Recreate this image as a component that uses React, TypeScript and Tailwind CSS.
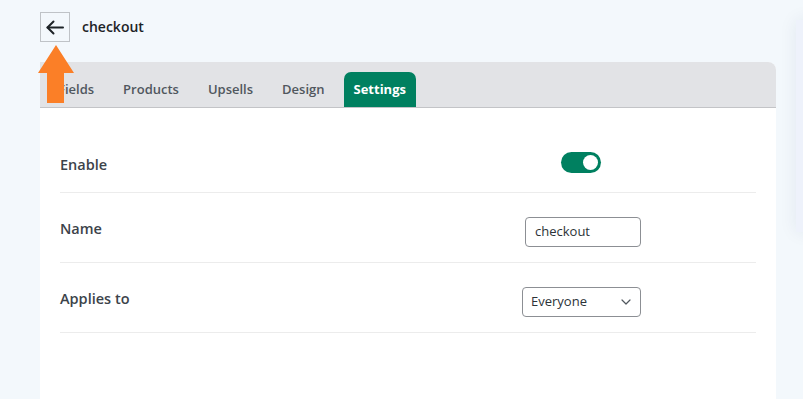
import { ChevronDown } from "lucide-react"

const tabs = ["Fields", "Products", "Upsells", "Design", "Settings"]

function Toggle() {
  return (
    <div className="flex h-[21px] w-[40px] items-center justify-end rounded-full bg-[#008060] px-[3px]">
      <div className="h-[15px] w-[15px] rounded-full bg-white" />
    </div>
  )
}

export default function App() {
  return (
    <div
      className="relative h-[399px] w-[803px] overflow-hidden bg-[#f3f8fc] pl-[40px] pt-[12px] text-[#3c434a]"
      style={{ fontFamily: '"Open Sans", "Noto Sans", sans-serif' }}
    >
      {/* panel peeking in from the right */}
      <div className="absolute left-[796px] top-[20px] h-[212px] w-[40px] bg-[#eef2fb] shadow-[0_0_18px_rgba(30,50,90,0.08)]" />

      <div className="flex h-[30px] items-center gap-[12px]">
        <button className="flex h-[30px] w-[30px] items-center justify-center border border-[#bfc3c7] bg-[#f3f8fc] text-[#1d2327]">
          <svg width="18" height="15" viewBox="0 0 18 15" fill="none" stroke="currentColor" strokeWidth="2" strokeLinecap="round" strokeLinejoin="round">
            <path d="M17 7.5H1.5" />
            <path d="M7.5 1.5L1.5 7.5L7.5 13.5" />
          </svg>
        </button>
        <h1 className="-mt-[1px] text-[14px] font-semibold leading-[20px] text-[#1d2327]">checkout</h1>
      </div>

      <div className="mt-[20px] w-[736px] overflow-hidden rounded-tr-[8px] bg-white">
        <div className="flex h-[46px] items-end gap-[9px] border-b border-[#c3c4c7] bg-[#e2e3e6] pl-[8px]">
          {tabs.map((t) => (
            <div
              key={t}
              className={
                t === "Settings"
                  ? "flex h-[35px] items-center rounded-t-[7px] bg-[#008060] px-[10px] text-[13px] font-bold text-white"
                  : "flex h-[35px] items-center px-[10px] text-[13px] font-semibold text-[#50575e]"
              }
            >
              {t}
            </div>
          ))}
        </div>

        <div className="h-[300px] px-[20px]">
          <div className="flex items-center border-b border-[#ececec] pb-[19px] pt-[44px]">
            <div className="flex-1 translate-y-[2px] text-[14.5px] font-semibold leading-[20px]">Enable</div>
            <div className="mr-[116px] flex w-[119px] justify-center">
              <Toggle />
            </div>
          </div>

          <div className="flex items-center border-b border-[#ececec] pb-[15px] pt-[24px]">
            <div className="flex-1 -translate-y-[3px] text-[14.5px] font-semibold leading-[20px]">Name</div>
            <div className="mr-[115px] flex w-[119px] justify-end">
              <div className="flex h-[30px] w-[116px] items-center rounded-[4px] border border-[#8c8f94] px-[9px] text-[13px] text-[#2c3338]">
                checkout
              </div>
            </div>
          </div>

          <div className="flex items-center border-b border-[#ececec] pb-[15px] pt-[24px]">
            <div className="flex-1 -translate-y-[3px] text-[14.5px] font-semibold leading-[20px]">Applies to</div>
            <div className="mr-[115px] flex w-[119px]">
              <div className="flex h-[30px] w-[119px] items-center justify-between rounded-[4px] border border-[#8c8f94] pl-[8px] pr-[6px] text-[13px] text-[#2c3338]">
                Everyone
                <ChevronDown className="h-[16px] w-[16px] text-[#50575e]" strokeWidth={1.8} />
              </div>
            </div>
          </div>
        </div>
      </div>

      {/* orange pointer arrow */}
      <svg className="absolute left-[38px] top-[45px]" width="37" height="59" viewBox="0 0 37 59">
        <path d="M18 0 L36 28 L26 28 L26 58 L9 58 L9 28 L0 28 Z" fill="#fb7f27" />
      </svg>
    </div>
  )
}
